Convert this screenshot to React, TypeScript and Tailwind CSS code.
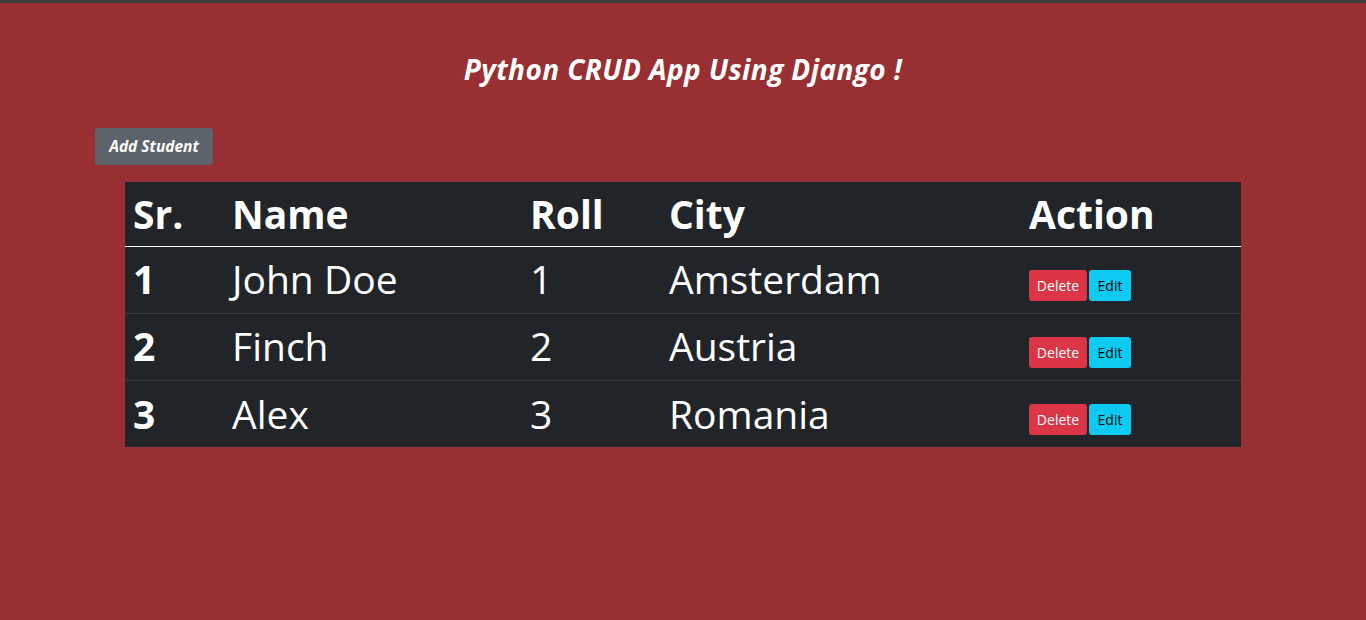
import React from "react";

type Student = { id: number; name: string; roll: number; city: string };

const students: Student[] = [
  { id: 1, name: "John Doe", roll: 1, city: "Amsterdam" },
  { id: 2, name: "Finch", roll: 2, city: "Austria" },
  { id: 3, name: "Alex", roll: 3, city: "Romania" },
];

export default function App() {
  return (
    <div
      className="min-h-screen w-full bg-[#983033] text-white"
      style={{ fontFamily: '"Open Sans", "Noto Sans", sans-serif' }}
    >
      <div className="h-[3px] bg-[#3c3f40]"></div>

      <h3 className="mt-[49px] text-center text-[28px] leading-[34px] font-bold italic tracking-[0.4px]">
        Python CRUD App Using Django !
      </h3>

      <div className="mt-[42px] pl-[95px]">
        <button className="h-[37px] w-[118px] rounded bg-[#5c636a] text-[15.5px] font-bold italic text-white">
          Add Student
        </button>
      </div>

      <table className="mt-[17px] ml-[125px] w-[1116px] table-fixed border-collapse bg-[#212529]">
        <colgroup>
          <col className="w-[99px]" />
          <col className="w-[298px]" />
          <col className="w-[139px]" />
          <col className="w-[360px]" />
          <col className="w-[220px]" />
        </colgroup>
        <thead>
          <tr className="h-[64px] border-b border-white text-left text-[39px]">
            <th className="px-2 font-bold">Sr.</th>
            <th className="px-2 font-bold">Name</th>
            <th className="px-2 font-bold">Roll</th>
            <th className="px-2 font-bold">City</th>
            <th className="px-2 font-bold">Action</th>
          </tr>
        </thead>
        <tbody>
          {students.map((s, i) => (
            <tr
              key={s.id}
              className={
                "h-[67px] text-[39px] " +
                (i < students.length - 1 ? "border-b border-[#373b3e]" : "")
              }
            >
              <th className="px-2 text-left font-bold">{s.id}</th>
              <td className="px-2 font-medium">{s.name}</td>
              <td className="px-2 font-medium">{s.roll}</td>
              <td className="px-2 font-medium">{s.city}</td>
              <td className="px-2 pt-[12px]">
                <div className="flex gap-[2px]">
                  <button className="h-[31px] w-[58px] rounded-[3px] bg-[#dc3545] text-[14px] text-white">
                    Delete
                  </button>
                  <button className="h-[31px] w-[42px] rounded-[3px] bg-[#0dcaf0] text-[14px] text-black">
                    Edit
                  </button>
                </div>
              </td>
            </tr>
          ))}
        </tbody>
      </table>
    </div>
  );
}
